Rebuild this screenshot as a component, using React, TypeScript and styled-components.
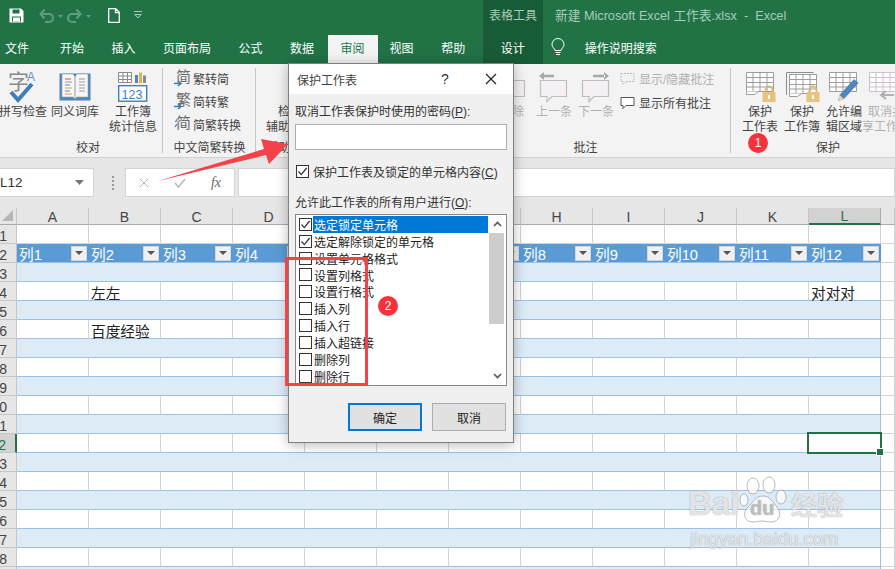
import React from "react";
import styled, { createGlobalStyle } from "styled-components";

const FONT = `"Liberation Sans", "Noto Sans CJK SC", sans-serif`;

const Global = createGlobalStyle`
  html, body { margin: 0; padding: 0; background: #fff; }
  * { box-sizing: border-box; }
  body { font-family: ${FONT}; }
  svg { overflow: visible; }
`;

const Page = styled.div`
  position: relative;
  width: 895px;
  height: 569px;
  overflow: hidden;
  display: flex;
  flex-direction: column;
  background: #fff;
  font-size: 12px;
  color: #444;
`;

/* ---------- title + tabs ---------- */
const TitleBar = styled.div`
  height: 35px;
  flex: none;
  background: #217346;
  display: flex;
  align-items: stretch;
  padding-left: 9px;
`;
const QuickIcon = styled.span<{ $w: number }>`
  width: ${(p) => p.$w}px;
  display: flex;
  align-items: center;
  flex: none;
  padding-bottom: 5px;
`;
const ToolsHead = styled.div`
  margin-left: 340px;
  width: 60px;
  height: 100%;
  background: #185c37;
  color: #a6cdb8;
  display: flex;
  align-items: center;
  justify-content: center;
  padding-bottom: 6px;
`;
const DocTitle = styled.div`
  margin-left: 12px;
  color: #a6cdb8;
  font-size: 12.7px;
  white-space: pre;
  display: flex;
  align-items: center;
  padding-bottom: 6px;
`;
const TabBar = styled.div`
  height: 29px;
  flex: none;
  background: #217346;
  display: flex;
  align-items: stretch;
`;
const Tab = styled.div<{ $pl: number; $pr: number; $active?: boolean; $dark?: boolean }>`
  padding: 0 ${(p) => p.$pr}px 5px ${(p) => p.$pl}px;
  flex: none;
  display: flex;
  align-items: center;
  color: ${(p) => (p.$active ? "#217346" : "#fff")};
  background: ${(p) => (p.$active ? "#f3f3f3" : p.$dark ? "#185c37" : "transparent")};
  white-space: nowrap;
`;
const TellMe = styled.div`
  display: flex;
  align-items: center;
  gap: 20px;
  margin-left: 8px;
  padding-bottom: 5px;
  color: #fff;
`;

/* ---------- ribbon ---------- */
const Ribbon = styled.div`
  height: 94px;
  flex: none;
  background: #f3f3f3;
  border-bottom: 1px solid #d2d2d2;
  display: flex;
`;
const Group = styled.div<{ $w: number; $pad?: number; $end?: boolean }>`
  width: ${(p) => p.$w}px;
  flex: none;
  display: flex;
  flex-direction: column;
  padding-left: ${(p) => p.$pad ?? 0}px;
  position: relative;
  &::after {
    content: "";
    display: ${(p) => (p.$end ? "none" : "block")};
    position: absolute;
    right: 0;
    top: 4px;
    bottom: 4px;
    width: 1px;
    background: #c6c6c6;
  }
`;
const GroupBody = styled.div<{ $gap?: number; $lead?: number }>`
  flex: 1;
  display: flex;
  gap: ${(p) => p.$gap ?? 0}px;
  padding-top: 5px;
  margin-left: ${(p) => p.$lead ?? 0}px;
  min-height: 0;
`;
const GroupLabel = styled.div<{ $shift?: number }>`
  height: 20px;
  flex: none;
  margin-bottom: -1px;
  margin-left: ${(p) => -(p.$shift ?? 0)}px;
  text-align: center;
  line-height: 20px;
  color: #444;
  white-space: nowrap;
`;
const BigButton = styled.div<{ $w: number; $off?: boolean }>`
  width: ${(p) => p.$w}px;
  flex: none;
  display: flex;
  flex-direction: column;
  align-items: center;
  color: ${(p) => (p.$off ? "#b1b1b1" : "#444")};
  line-height: 15px;
`;
const BigIcon = styled.div`
  height: 36px;
  display: flex;
  align-items: center;
  justify-content: center;
  flex: none;
`;
const Line = styled.span`
  white-space: nowrap;
  display: block;
  text-align: center;
`;
const SmallList = styled.div<{ $x: number; $step: number }>`
  display: flex;
  flex-direction: column;
  gap: ${(p) => p.$step}px;
  padding-left: ${(p) => p.$x}px;
`;
const SmallRow = styled.div<{ $off?: boolean; $gap: number }>`
  height: 18px;
  display: flex;
  align-items: center;
  gap: ${(p) => p.$gap}px;
  white-space: nowrap;
  color: ${(p) => (p.$off ? "#b1b1b1" : "#444")};
`;

/* ---------- formula bar ---------- */
const FormulaBar = styled.div`
  height: 50px;
  flex: none;
  background: #e6e6e6;
  display: flex;
  gap: 3px;
  padding: 10px 0 11px;
`;
const NameBox = styled.div`
  width: 94px;
  background: #fff;
  border: 1px solid #d4d4d4;
  border-left: 0;
  display: flex;
  align-items: center;
  justify-content: space-between;
  padding: 0 9px 0 0;
  font-size: 13.5px;
  color: #333;
`;
const Dots = styled.div`
  width: 25px;
  display: flex;
  flex-direction: column;
  align-items: center;
  justify-content: center;
  gap: 2px;
  padding-left: 6px;
  i {
    width: 2px;
    height: 2px;
    background: #9a9a9a;
    display: block;
  }
`;
const FnBox = styled.div`
  width: 110px;
  background: #fff;
  border: 1px solid #d4d4d4;
  display: flex;
  align-items: center;
  color: #b8b8b8;
`;
const FnSlot = styled.span`
  flex: 1;
  display: flex;
  justify-content: center;
`;
const FxText = styled.span`
  font-family: "Liberation Serif", serif;
  font-style: italic;
  font-size: 14px;
  color: #666;
`;
const FormulaInput = styled.div`
  flex: 1;
  background: #fff;
  border: 1px solid #d4d4d4;
`;

/* ---------- sheet ---------- */
const Sheet = styled.div`
  flex: 1;
  min-height: 0;
  display: grid;
  grid-template-columns: 17px repeat(12, 72px) 14px;
  grid-auto-rows: 19px;
  grid-template-rows: 17px;
  overflow: hidden;
  font-size: 14.67px;
  color: #222;
`;
const Corner = styled.div`
  background: #e6e6e6;
  border-right: 1px solid #c6c6c6;
  border-bottom: 1px solid #ababab;
  position: relative;
  &::after {
    content: "";
    position: absolute;
    right: 3px;
    bottom: 3px;
    border-style: solid;
    border-width: 0 0 11px 11px;
    border-color: transparent transparent #b6b6b6 transparent;
  }
`;
const ColHead = styled.div<{ $on?: boolean }>`
  background: ${(p) => (p.$on ? "#d2d2d2" : "#e6e6e6")};
  border-right: 1px solid ${(p) => (p.$on ? "#ababab" : "#c6c6c6")};
  border-bottom: ${(p) => (p.$on ? "2px solid #217346" : "1px solid #ababab")};
  color: ${(p) => (p.$on ? "#217346" : "#444")};
  font-size: 14px;
  padding-top: 1px;
  display: flex;
  align-items: center;
  justify-content: center;
`;
const RowHead = styled.div<{ $on?: boolean }>`
  background: ${(p) => (p.$on ? "#d2d2d2" : "#e6e6e6")};
  border-right: ${(p) => (p.$on ? "2px solid #217346" : "1px solid #c6c6c6")};
  border-bottom: 1px solid #c6c6c6;
  color: ${(p) => (p.$on ? "#217346" : "#444")};
  font-size: 14px;
  display: flex;
  justify-content: flex-end;
  align-items: center;
  padding: 3px 9px 0 0;
  overflow: hidden;
  white-space: nowrap;
`;
const Cell = styled.div`
  border-right: 1px solid #d4d4d4;
  border-bottom: 1px solid #d4d4d4;
`;
const TableCell = styled.div<{ $band: boolean; $last: boolean }>`
  background: ${(p) => (p.$band ? "#ddebf7" : "#fff")};
  border-bottom: 1px solid #9bc2e6;
  border-right: ${(p) =>
    p.$last ? "1px solid #9bc2e6" : p.$band ? "0" : "1px solid #d4d4d4"};
  padding-left: 2px;
  white-space: nowrap;
  line-height: 24px;
  height: 19px;
`;
const HeaderCell = styled.div`
  background: #5b9bd5;
  color: #fff;
  display: flex;
  align-items: center;
  justify-content: space-between;
  padding: 0 2px;
  border-bottom: 1px solid #9bc2e6;
`;
const HeaderLabel = styled.span`
  height: 18px;
  line-height: 23px;
`;
const FilterButton = styled.span`
  width: 16px;
  height: 15px;
  background: #f0f0f0;
  border: 1px solid #d6d6d6;
  display: flex;
  align-items: center;
  justify-content: center;
  &::after {
    content: "";
    border-style: solid;
    border-width: 4px 4px 0 4px;
    border-color: #555 transparent transparent transparent;
  }
`;
const SelectedCell = styled.div`
  position: relative;
  border-right: 1px solid #9bc2e6;
  border-bottom: 1px solid #9bc2e6;
  &::before {
    content: "";
    position: absolute;
    left: -2px;
    top: -2px;
    right: -2px;
    bottom: -2px;
    border: 2px solid #217346;
  }
  &::after {
    content: "";
    position: absolute;
    right: -4px;
    bottom: -4px;
    width: 6px;
    height: 6px;
    background: #217346;
    border: 1px solid #fff;
  }
`;

/* ---------- dialog ---------- */
const Dialog = styled.div`
  position: absolute;
  left: 288px;
  top: 63px;
  width: 226px;
  height: 380px;
  background: #f0f0f0;
  border: 1px solid #7f7f7f;
  box-shadow: 0 2px 12px rgba(0, 0, 0, 0.28);
  display: flex;
  flex-direction: column;
  color: #333;
`;
const DialogTitle = styled.div`
  height: 30px;
  flex: none;
  background: #fff;
  display: flex;
  align-items: center;
  padding: 0 16px 0 8px;
  color: #444;
`;
const TitleText = styled.span`
  flex: 1;
`;
const HelpMark = styled.span`
  width: 44px;
  font-size: 14px;
  color: #333;
`;
const DialogBody = styled.div`
  flex: 1;
  display: flex;
  flex-direction: column;
  padding: 10px 6px 11px;
  min-height: 0;
`;
const FieldLabel = styled.div`
  line-height: 16px;
  height: 16px;
  white-space: nowrap;
  color: #333;
  u { text-underline-offset: 1px; }
`;
const PasswordInput = styled.div`
  height: 26px;
  margin-top: 4px;
  background: #fff;
  border: 1px solid #adadad;
`;
const CheckLine = styled.div`
  display: flex;
  align-items: center;
  gap: 4px;
  margin: 14px 0 15px 1px;
  height: 16px;
  white-space: nowrap;
  u { text-underline-offset: 1px; }
`;
const Box = styled.span`
  width: 13px;
  height: 13px;
  flex: none;
  background: #fff;
  border: 1px solid #333;
  display: flex;
  align-items: center;
  justify-content: center;
`;
const ListBox = styled.div`
  margin-top: 3px;
  height: 173px;
  background: #fff;
  border: 1px solid #828790;
  display: flex;
  overflow: hidden;
`;
const ListItems = styled.div`
  flex: 1;
  padding: 1px 0 0 3px;
  overflow: hidden;
`;
const ListItem = styled.div`
  height: 16.9px;
  display: flex;
  align-items: center;
  gap: 1px;
`;
const ListText = styled.span<{ $sel?: boolean }>`
  flex: 1;
  height: 100%;
  display: flex;
  align-items: center;
  padding-left: 1px;
  white-space: nowrap;
  color: ${(p) => (p.$sel ? "#fff" : "#222")};
  background: ${(p) => (p.$sel ? "#0078d7" : "transparent")};
`;
const Scroll = styled.div`
  width: 18px;
  flex: none;
  display: flex;
  flex-direction: column;
  align-items: center;
  justify-content: space-between;
  position: relative;
  padding: 6px 0;
  background: #fff;
`;
const ScrollThumb = styled.div`
  position: absolute;
  left: 1px;
  right: 2px;
  top: 18px;
  height: 91px;
  background: #cdcdcd;
`;
const Buttons = styled.div`
  display: flex;
  justify-content: flex-end;
  gap: 10px;
  margin-top: 17px;
  padding-right: 1px;
`;
const DialogButton = styled.div<{ $primary?: boolean }>`
  width: 74px;
  height: 28px;
  background: #e1e1e1;
  border: ${(p) => (p.$primary ? "2px solid #0078d7" : "1px solid #adadad")};
  display: flex;
  align-items: center;
  justify-content: center;
  color: #222;
`;

/* ---------- overlays ---------- */
const Badge = styled.div<{ $x: number; $y: number }>`
  position: absolute;
  left: ${(p) => p.$x}px;
  top: ${(p) => p.$y}px;
  width: 20px;
  height: 20px;
  border-radius: 50%;
  background: #f4333c;
  color: #fff;
  font-size: 12px;
  display: flex;
  align-items: center;
  justify-content: center;
`;
const RedFrame = styled.div`
  position: absolute;
  left: 285px;
  top: 257px;
  width: 83px;
  height: 129px;
  border: 3px solid #f4414a;
`;
const ArrowLayer = styled.svg`
  position: absolute;
  left: 150px;
  top: 130px;
`;
const Watermark = styled.div`
  position: absolute;
  left: 688px;
  top: 476px;
  width: 165px;
  height: 76px;
  color: rgba(255, 255, 255, 0.78);
  text-shadow: 0 0 1px rgba(110, 110, 110, 0.85);
`;
const WmBai = styled.span`
  position: absolute;
  left: 0;
  top: 8px;
  font-size: 33px;
  font-weight: 700;
  line-height: 40px;
`;
const WmCn = styled.span`
  position: absolute;
  left: 103px;
  top: 12px;
  font-size: 26px;
  font-weight: 700;
  line-height: 36px;
  white-space: nowrap;
`;
const WmUrl = styled.span`
  position: absolute;
  left: 2px;
  top: 51px;
  font-size: 18.4px;
  line-height: 24px;
  white-space: nowrap;
`;
const WmPaw = styled.svg`
  position: absolute;
  left: 51px;
  top: 0;
`;
const WmDu = styled.span`
  position: absolute;
  left: 62px;
  top: 19px;
  font-size: 20px;
  font-weight: 700;
  line-height: 26px;
  color: rgba(255, 255, 255, 0.55);
  text-shadow: 0 0 1px rgba(90, 90, 90, 0.9);
`;

/* ---------- icons ---------- */
const Check = () => (
  <svg width="11" height="11" viewBox="0 0 11 11">
    <path d="M1.5 5.5 4.3 8.6 9.6 2" fill="none" stroke="#333" strokeWidth="1.3" />
  </svg>
);
const SaveIcon = () => (
  <svg width="15" height="15" viewBox="0 0 15 15">
    <path d="M.5.5h11.5l2.5 2.5v11.5H.5z" fill="#fff" />
    <rect x="3.5" y="1.5" width="7" height="4" fill="#217346" />
    <rect x="3" y="8.5" width="9" height="5" fill="#217346" />
    <rect x="4" y="9.5" width="7" height="4" fill="#fff" />
  </svg>
);
const UndoIcon = ({ flip }: { flip?: boolean }) => (
  <svg width="24" height="15" viewBox="0 0 24 15">
    <g transform={flip ? "translate(15,0) scale(-1,1)" : undefined} fill="none" stroke="#5f9f7e" strokeWidth="2">
      <path d="M1.5 6H10a4 4 0 0 1 0 8H6" />
      <path d="M5.5 1.5 1.5 6l4 4.5" />
    </g>
    <path d="M19 7h5l-2.500 3z" fill="#5f9f7e" />
  </svg>
);
const NewIcon = () => (
  <svg width="12" height="15" viewBox="0 0 12 15">
    <path d="M.7.7h7l3.600 3.600v10H.700z M7.500.7v4h4" fill="none" stroke="#fff" strokeWidth="1.300" />
  </svg>
);
const CustomIcon = () => (
  <svg width="9" height="9" viewBox="0 0 9 9">
    <path d="M0 .5h8" stroke="#a6cdb8" />
    <path d="M.8 3.500h6.500L4 7z" fill="none" stroke="#a6cdb8" />
  </svg>
);
const BulbIcon = () => (
  <svg width="14" height="18" viewBox="0 0 14 18">
    <path d="M4 12.500C3.500 10 1 9.500 1 6.500a6 6 0 0 1 12 0c0 3-2.500 3.500-3 6z" fill="none" stroke="#fff" />
    <path d="M4.500 14.500h5M5 16.500h4" stroke="#fff" />
  </svg>
);
const SpellIcon = () => (
  <svg width="30" height="36" viewBox="0 0 30 36">
    <text x="0" y="20" fontSize="21" fill="#8a8a8a" fontFamily="Noto Sans CJK SC">字</text>
    <text x="19" y="12" fontSize="12" fill="#6f8fae" fontFamily="Liberation Sans">A</text>
    <path d="M3 23l7 8L24 15" fill="none" stroke="#3d7fb8" strokeWidth="4" />
  </svg>
);
const BookIcon = () => (
  <svg width="32" height="28" viewBox="0 0 32 28">
    <rect x=".5" y=".5" width="31" height="27" fill="#4f87bb" />
    <path d="M3 1h11l2 3 2-3h11v23H18l-2 2-2-2H3z" fill="#f7f7f7" stroke="#9a9a9a" strokeWidth=".6" />
    <path d="M16 4v22" stroke="#9a9a9a" />
    <path d="M6 6h6" stroke="#d05a3c" />
    <path d="M6 9h7M20 6h6M20 9h6M20 12h6M20 15h6M20 18h6" stroke="#9a9a9a" />
    <path d="M6 12h5M6 18h5" stroke="#4f87bb" />
    <path d="M6 15h7M6 21h7" stroke="#d8a24a" />
  </svg>
);
const StatsIcon = () => (
  <svg width="30" height="30" viewBox="0 0 30 30">
    <path d="M.5.500h13v10H.5zM.5 4h13M.5 7.500h13M5 .5v10M9.500.5v10" fill="#fff" stroke="#8a8a8a" />
    <rect x="17" y="3" width="3" height="8" fill="#4f87bb" />
    <rect x="21" y=".5" width="3" height="10.500" fill="#e0b058" />
    <rect x="25" y="3.500" width="3" height="7.500" fill="#8a8a8a" />
    <rect x=".7" y="13.700" width="28" height="15.500" fill="#fff" stroke="#3d7fb8" strokeWidth="1.400" />
    <text x="3.500" y="26.500" fontSize="12.500" fill="#3d7fb8" fontFamily="Liberation Sans">123</text>
  </svg>
);
const ConvertIcon = ({ ch, dots }: { ch: string; dots?: boolean }) => (
  <svg width="17" height="18" viewBox="0 0 17 18">
    <text x="2" y="13" fontSize="15" fill="#6a6a6a" fontFamily="Noto Sans CJK SC">{ch}</text>
    {dots ? (
      <path d="M3 4.500 1.500 7M3 9 1 12" stroke="#3d7fb8" strokeWidth="1.300" fill="none" />
    ) : (
      <path d="M0 14.500h6M4 12l3 2.500L4 17" stroke="#3d7fb8" strokeWidth="1.600" fill="none" />
    )}
  </svg>
);
const Bubble = ({ dir }: { dir?: "l" | "r" }) => (
  <svg width="30" height="32" viewBox="0 0 30 32">
    <path d="M1.500 9.500h26v16H13l-5 5v-5H1.500z" fill="#f4f0f4" stroke="#bdbdbd" strokeWidth="1.200" />
    {dir === "l" && <path d="M0 5l5-4v8zM4 3.800h11v2.500H4z" fill="#a8a8a8" />}
    {dir === "r" && <path d="M28 5l-5-4v8zM12 3.800h12v2.500H12z" fill="#a8a8a8" />}
  </svg>
);
const SmallBubble = ({ off }: { off?: boolean }) => (
  <svg width="15" height="15" viewBox="0 0 15 15">
    <path d="M1 2.500h13v8H6l-3 3v-3H1z" fill={off ? "#f4f0f4" : "#fff"} stroke={off ? "#bdbdbd" : "#555"} strokeDasharray={off ? "2 1" : undefined} />
  </svg>
);
const Lock = ({ x, y }: { x: number; y: number }) => (
  <g transform={`translate(${x},${y})`}>
    <path d="M3.500 6V4a3.500 3.500 0 0 1 7 0v2" fill="none" stroke="#d9b671" strokeWidth="1.800" />
    <rect x=".5" y="6" width="13" height="10" fill="#e9c27c" />
    <rect x="6" y="9" width="2" height="4" fill="#fff" />
  </g>
);
const SheetGrid = ({ fade }: { fade?: boolean }) => (
  <path
    d="M1.500 1.500h27v19h-27zM1.500 6.500h27M1.500 11.500h27M1.500 16h27M8 1.500v19M15 1.500v19M22 1.500v19"
    fill="#fff"
    stroke={fade ? "#cdbfcf" : "#9d9d9d"}
  />
);
const ProtectSheet = () => (
  <svg width="31" height="32" viewBox="0 0 31 32">
    <SheetGrid />
    <path d="M1.500 20.500v3h8l4-3" fill="#fff" stroke="#9d9d9d" />
    <Lock x={17} y={15} />
  </svg>
);
const ProtectBook = () => (
  <svg width="36" height="32" viewBox="0 0 36 32">
    <path d="M2.500 24V1.500h27" fill="none" stroke="#8d8d8d" />
    <g transform="translate(4,2)">
      <SheetGrid />
    </g>
    <path d="M5.500 22.500v3h8l4-3" fill="#fff" stroke="#9d9d9d" />
    <Lock x={22} y={15} />
  </svg>
);
const AllowEdit = () => (
  <svg width="32" height="32" viewBox="0 0 32 32">
    <SheetGrid />
    <path d="M10 30l1.500-6L26 8l4.500 4L16 28z" fill="#4f87bb" />
    <path d="M10 30l1.500-6 4.500 4z" fill="#e7d3a8" />
  </svg>
);
const Unshare = () => (
  <svg width="36" height="32" viewBox="0 0 36 32">
    <SheetGrid fade />
    <path d="M14 24h12M18 20l-5 4 5 4" fill="none" stroke="#b1b1b1" strokeWidth="2" />
  </svg>
);
const Chevron = ({ up }: { up?: boolean }) => (
  <svg width="9" height="6" viewBox="0 0 9 6">
    <path d={up ? "M1 5l3.500-3.500L8 5" : "M1 1l3.500 3.500L8 1"} fill="none" stroke="#555" strokeWidth="1.600" />
  </svg>
);
const Cross = ({ size, color }: { size: number; color: string }) => (
  <svg width={size} height={size} viewBox="0 0 12 12">
    <path d="M1 1l10 10M11 1 1 11" stroke={color} strokeWidth="1.200" />
  </svg>
);

/* ---------- data ---------- */
const COLS = ["A", "B", "C", "D", "E", "F", "G", "H", "I", "J", "K", "L"];
const TABS: [string, number, number][] = [
  ["文件", 5, 17],
  ["开始", 14, 13.5],
  ["插入", 14, 13.5],
  ["页面布局", 14, 13.5],
  ["公式", 14, 13.5],
  ["数据", 14, 13.5],
];
const LIST = [
  "选定锁定单元格",
  "选定解除锁定的单元格",
  "设置单元格格式",
  "设置列格式",
  "设置行格式",
  "插入列",
  "插入行",
  "插入超链接",
  "删除列",
  "删除行",
];
const TEXTS: Record<string, string> = { "4-1": "左左", "6-1": "百度经验", "4-11": "对对对" };
const ROWS = Array.from({ length: 19 }, (_, i) => i + 1);

const Big = ({ icon, lines, w, off }: { icon: React.ReactNode; lines: string[]; w: number; off?: boolean }) => (
  <BigButton $w={w} $off={off}>
    <BigIcon>{icon}</BigIcon>
    {lines.map((l) => (
      <Line key={l}>{l}</Line>
    ))}
  </BigButton>
);

export default function App() {
  return (
    <Page>
      <Global />
      <TitleBar>
        <QuickIcon $w={30}><SaveIcon /></QuickIcon>
        <QuickIcon $w={28}><UndoIcon /></QuickIcon>
        <QuickIcon $w={41}><UndoIcon flip /></QuickIcon>
        <QuickIcon $w={26}><NewIcon /></QuickIcon>
        <QuickIcon $w={9}><CustomIcon /></QuickIcon>
        <ToolsHead>表格工具</ToolsHead>
        <DocTitle>新建 Microsoft Excel 工作表.xlsx  -  Excel</DocTitle>
      </TitleBar>
      <TabBar>
        {TABS.map(([t, l, r]) => (
          <Tab key={t} $pl={l} $pr={r}>{t}</Tab>
        ))}
        <Tab $pl={13} $pr={13} $active>审阅</Tab>
        <Tab $pl={12} $pr={13.5}>视图</Tab>
        <Tab $pl={14} $pr={17.5}>帮助</Tab>
        <Tab $pl={18} $pr={18} $dark>设计</Tab>
        <TellMe>
          <BulbIcon />
          操作说明搜索
        </TellMe>
      </TabBar>
      <Ribbon>
        <Group $w={163}>
          <GroupBody $gap={4} $lead={-1}>
            <Big w={48} icon={<SpellIcon />} lines={["拼写检查"]} />
            <Big w={48} icon={<BookIcon />} lines={["同义词库"]} />
            <Big w={60} icon={<StatsIcon />} lines={["工作簿", "统计信息"]} />
          </GroupBody>
          <GroupLabel $shift={-13}>校对</GroupLabel>
        </Group>
        <Group $w={93}>
          <GroupBody>
            <SmallList $x={11} $step={5}>
              <SmallRow $gap={2}><ConvertIcon ch="简" />繁转简</SmallRow>
              <SmallRow $gap={2}><ConvertIcon ch="繁" />简转繁</SmallRow>
              <SmallRow $gap={2}><ConvertIcon ch="简" dots />简繁转换</SmallRow>
            </SmallList>
          </GroupBody>
          <GroupLabel>中文简繁转换</GroupLabel>
        </Group>
        <Group $w={69} $pad={15}>
          <GroupBody>
            <Big w={38} icon={<span />} lines={["检查", "辅助功能"]} />
          </GroupBody>
          <GroupLabel $shift={15}>辅助功能</GroupLabel>
        </Group>
        <Group $w={115}>
          <GroupBody />
          <GroupLabel>见解</GroupLabel>
        </Group>
        <Group $w={291} $pad={54}>
          <GroupBody $gap={6}>
            <Big w={36} off icon={<Bubble />} lines={["删除"]} />
            <Big w={36} off icon={<Bubble dir="l" />} lines={["上一条"]} />
            <Big w={36} off icon={<Bubble dir="r" />} lines={["下一条"]} />
            <SmallList $x={0} $step={6}>
              <SmallRow $off $gap={4}><SmallBubble off />显示/隐藏批注</SmallRow>
              <SmallRow $gap={4}><SmallBubble />显示所有批注</SmallRow>
            </SmallList>
          </GroupBody>
          <GroupLabel $shift={54}>批注</GroupLabel>
        </Group>
        <Group $w={194} $pad={8} $end>
          <GroupBody>
            <Big w={42} icon={<ProtectSheet />} lines={["保护", "工作表"]} />
            <Big w={42} icon={<ProtectBook />} lines={["保护", "工作簿"]} />
            <Big w={42} icon={<AllowEdit />} lines={["允许编", "辑区域"]} />
            <Big w={42} off icon={<Unshare />} lines={["取消共", "享工作簿"]} />
          </GroupBody>
          <GroupLabel $shift={8}>保护</GroupLabel>
        </Group>
      </Ribbon>
      <FormulaBar>
        <NameBox>
          L12
          <svg width="9" height="5" viewBox="0 0 9 5"><path d="M0 0h9L4.500 5z" fill="#777" /></svg>
        </NameBox>
        <Dots><i /><i /><i /><i /></Dots>
        <FnBox>
          <FnSlot><Cross size={10} color="#b8b8b8" /></FnSlot>
          <FnSlot>
            <svg width="12" height="10" viewBox="0 0 12 10"><path d="M1 5l3.500 4L11 1" fill="none" stroke="#b8b8b8" strokeWidth="1.500" /></svg>
          </FnSlot>
          <FnSlot><FxText>fx</FxText></FnSlot>
        </FnBox>
        <FormulaInput />
      </FormulaBar>
      <Sheet>
        <Corner />
        {COLS.map((c) => (
          <ColHead key={c} $on={c === "L"}>{c}</ColHead>
        ))}
        <ColHead />
        {ROWS.map((r) => (
          <React.Fragment key={r}>
            <RowHead $on={r === 12}>{r}</RowHead>
            {COLS.map((c, i) => {
              if (r === 1) return <Cell key={c} />;
              if (r === 2)
                return (
                  <HeaderCell key={c}>
                    <HeaderLabel>列{i + 1}</HeaderLabel>
                    <FilterButton />
                  </HeaderCell>
                );
              if (r === 12 && i === 11) return <SelectedCell key={c} />;
              return (
                <TableCell key={c} $band={r % 2 === 1} $last={i === 11}>
                  {TEXTS[`${r}-${i}`]}
                </TableCell>
              );
            })}
            <Cell />
          </React.Fragment>
        ))}
      </Sheet>

      <Watermark>
        <WmPaw width="50" height="52" viewBox="0 0 50 52">
          <g fill="rgba(255,255,255,.72)" stroke="rgba(130,130,130,.55)">
            <ellipse cx="14" cy="10" rx="6" ry="8" />
            <ellipse cx="30" cy="9" rx="6" ry="8" />
            <ellipse cx="42" cy="21" rx="5" ry="7" />
            <ellipse cx="5" cy="24" rx="4" ry="6" />
            <path d="M24 20c7 0 9 6 14 11 5 6 3 15-6 15-4 0-6-1-9-1s-5 1-9 1C5 46 3 37 9 31c5-4 7-11 15-11z" />
          </g>
        </WmPaw>
        <WmBai>Bai</WmBai>
        <WmDu>du</WmDu>
        <WmCn>经验</WmCn>
        <WmUrl>jingyan.baidu.com</WmUrl>
      </Watermark>

      <Dialog>
        <DialogTitle>
          <TitleText>保护工作表</TitleText>
          <HelpMark>?</HelpMark>
          <Cross size={12} color="#222" />
        </DialogTitle>
        <DialogBody>
          <FieldLabel>取消工作表保护时使用的密码(<u>P</u>):</FieldLabel>
          <PasswordInput />
          <CheckLine>
            <Box><Check /></Box>
            <span>保护工作表及锁定的单元格内容(<u>C</u>)</span>
          </CheckLine>
          <FieldLabel>允许此工作表的所有用户进行(<u>O</u>):</FieldLabel>
          <ListBox>
            <ListItems>
              {LIST.map((t, i) => (
                <ListItem key={t}>
                  <Box>{i < 2 && <Check />}</Box>
                  <ListText $sel={i === 0}>{t}</ListText>
                </ListItem>
              ))}
            </ListItems>
            <Scroll>
              <ScrollThumb />
              <Chevron up />
              <Chevron />
            </Scroll>
          </ListBox>
          <Buttons>
            <DialogButton $primary>确定</DialogButton>
            <DialogButton>取消</DialogButton>
          </Buttons>
        </DialogBody>
      </Dialog>

      <RedFrame />
      <Badge $x={378} $y={296}>2</Badge>
      <Badge $x={748} $y={133}>1</Badge>
      <ArrowLayer width="145" height="60" viewBox="0 0 145 60">
        <path d="M8 51 114 19l-3-10 27 5-19 20-3-9z" fill="#f4414a" />
      </ArrowLayer>
    </Page>
  );
}
